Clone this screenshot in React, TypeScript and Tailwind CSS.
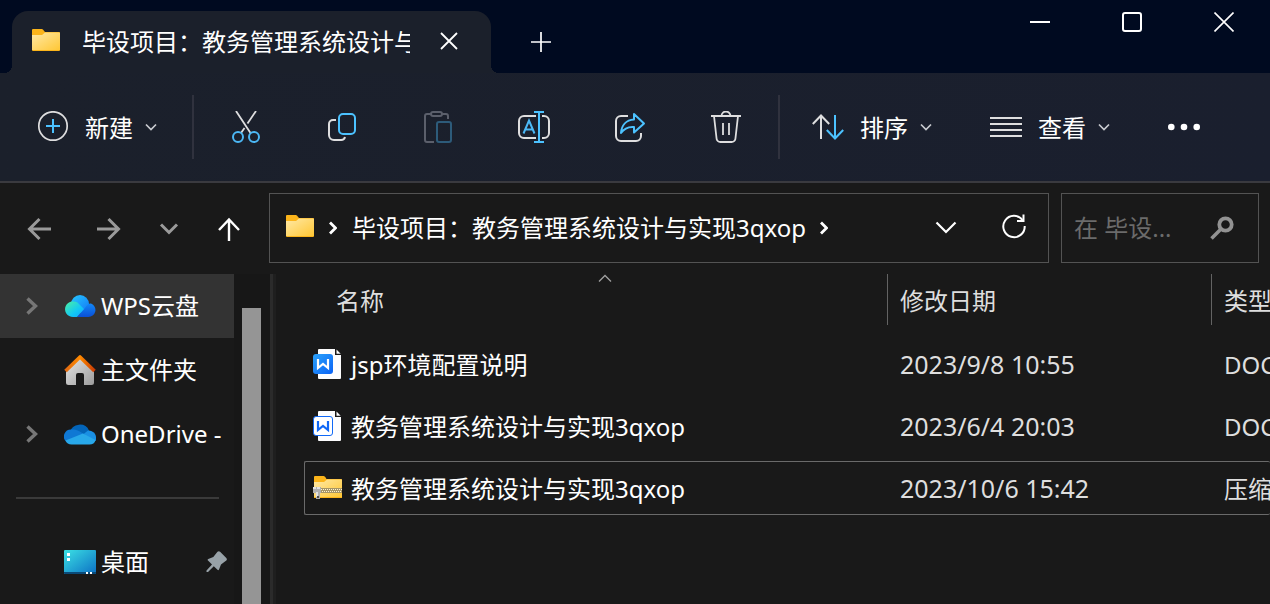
import type { ReactNode } from "react";

const TITLE = "毕设项目：教务管理系统设计与实现3qxop";

interface IconProps {
    readonly className?: string;
}

const FolderIcon = ({ className = "" }: IconProps) => (
    <svg width="28" height="22" viewBox="0 0 28 22" className={`shrink-0 ${className}`}>
        <defs>
            <linearGradient id="folder" x1="0" y1="0" x2="1" y2="1">
                <stop offset="0" stopColor="#ffe9a6" />
                <stop offset="1" stopColor="#ffc735" />
            </linearGradient>
        </defs>
        <path d="M0 1a1 1 0 0 1 1-1h8.500c1 0 1.500.5 2.200 1.500L13 3h14a1 1 0 0 1 1 1v17a1 1 0 0 1-1 1H1a1 1 0 0 1-1-1z" fill="#fbb41a" />
        <path d="M0 6h10l3-2.500h14.500l.5.5v17H0z" fill="url(#folder)" />
    </svg>
);

const ZipIcon = () => (
    <svg width="30" height="24" viewBox="0 0 30 24" className="-mr-0.5 shrink-0">
        <path d="M1 1a1 1 0 0 1 1-1h8.500c1 0 2 1 3 3H28a1 1 0 0 1 1 1v18H1z" fill="#fbb41a" />
        <path d="M1 6h10l3-2.500h15V21H1z" fill="url(#folder)" />
        <path d="M7 12h22v5H7z" fill="#a89666" />
        <path d="M8 13.500h21" stroke="#fff3d0" strokeWidth="1" strokeDasharray="1 1" />
        <path d="M9 15.500h20" stroke="#fff3d0" strokeWidth="1" strokeDasharray="1 1" />
        <path d="M0 11h8v6H7v6H3v-6H0z" fill="#b0b0b0" />
        <path d="M0 11h3v2H0zM4 11h3v2H4zM3 16h2v5H3z" fill="#e2e2e2" />
        <path d="M4 20h2v2H4z" fill="#4d4d4d" />
    </svg>
);

const DocIcon = ({ solid }: { readonly solid: boolean }) => (
    <svg width="28" height="32" viewBox="0 0 28 32" className="shrink-0">
        <defs>
            <linearGradient id="doc" x1="0" y1="0" x2="1" y2="1">
                <stop offset="0" stopColor="#2ba3fb" />
                <stop offset="1" stopColor="#0a62f5" />
            </linearGradient>
        </defs>
        <path d="M6 1h16v6h6v23a1 1 0 0 1-1 1H6a1 1 0 0 1-1-1V2a1 1 0 0 1 1-1z" fill="#fdfdfe" />
        <path d="M23.500 1.500v4.200h4.200z" fill="#fdfdfe" />
        {solid ? (
            <rect x="0" y="6" width="20" height="20" rx="3" fill="url(#doc)" />
        ) : (
            <rect x="0.500" y="6.500" width="19" height="19" rx="2.500" fill="#fff" stroke="#1068f6" />
        )}
        <path d="M5 11v9l5-4 5 4v-9" fill="none" stroke={solid ? "#fff" : "#1068f6"} strokeWidth="2.200" />
    </svg>
);

const Chevron = ({ className = "" }: IconProps) => (
    <svg width="12" height="8" viewBox="0 0 12 8" fill="none" className={className}>
        <path d="M1 1.500l5 5 5-5" stroke="#c9cbd0" strokeWidth="1.700" />
    </svg>
);

const CrumbChevron = ({ className = "" }: IconProps) => (
    <svg width="8" height="14" viewBox="0 0 8 14" fill="none" className={`shrink-0 ${className}`}>
        <path d="M1 1.500L6.500 7 1 12.500" stroke="#fff" strokeWidth="2.800" />
    </svg>
);

const ToolButton = ({ label, children }: { readonly label: string; readonly children: ReactNode }) => (
    <button type="button" aria-label={label} className="flex h-16 w-24 shrink-0 items-center justify-center">
        <svg width="32" height="32" viewBox="0 0 32 32" fill="none" stroke="#dededf" strokeWidth="2">
            {children}
        </svg>
    </button>
);

const MenuButton = ({ label, children }: { readonly label: string; readonly children: ReactNode }) => (
    <button type="button" className="flex h-16 shrink-0 items-center">
        <svg width="32" height="32" viewBox="0 0 32 32" fill="none" stroke="#dededf" strokeWidth="2">
            {children}
        </svg>
        <span className="ml-4 pt-0.5 text-2xl">{label}</span>
        <Chevron className="ml-3" />
    </button>
);

const Separator = () => <div className="mx-1 h-16 w-0.5 shrink-0 bg-[#30323e]" />;

const TitleBar = () => (
    <header className="flex h-[73px] bg-[#000a20]">
        <div className="relative mt-[11px] ml-3 flex w-[479px] shrink-0 items-center rounded-t-2xl bg-[#1b202b] pl-5">
            <span className="absolute bottom-0 -left-2 size-2 bg-[radial-gradient(circle_at_0_0,transparent_8px,#1b202b_8px)]" />
            <span className="absolute -right-2 bottom-0 size-2 bg-[radial-gradient(circle_at_100%_0,transparent_8px,#1b202b_8px)]" />
            <FolderIcon className="-mt-1" />
            <span className="ml-[22px] w-[328px] overflow-hidden text-2xl whitespace-nowrap">{TITLE}</span>
            <button type="button" aria-label="关闭标签页" className="ml-[30px]">
                <svg width="18" height="18" viewBox="0 0 18 18" stroke="#fff" strokeWidth="1.800" className="-mt-0.5">
                    <path d="M1 1l16 16M17 1L1 17" />
                </svg>
            </button>
        </div>
        <button type="button" aria-label="新标签页" className="mt-[11px] ml-10">
            <svg width="20" height="20" viewBox="0 0 20 20" stroke="#fff" strokeWidth="1.700">
                <path d="M10 0v20M0 10h20" />
            </svg>
        </button>
        <div className="ml-auto flex h-11">
            <button type="button" aria-label="最小化" className="flex w-[92px] items-center justify-center">
                <svg width="20" height="20" viewBox="0 0 20 20">
                    <path d="M0 9h20v2H0z" fill="#fff" />
                </svg>
            </button>
            <button type="button" aria-label="最大化" className="flex w-[92px] items-center justify-center">
                <svg width="20" height="20" viewBox="0 0 20 20" fill="none">
                    <rect x="1" y="1" width="18" height="18" rx="2" stroke="#fff" strokeWidth="2" />
                </svg>
            </button>
            <button type="button" aria-label="关闭" className="flex w-[92px] items-center justify-center">
                <svg width="20" height="20" viewBox="0 0 20 20" stroke="#fff" strokeWidth="1.600">
                    <path d="M.5.5l19 19M19.500.5l-19 19" />
                </svg>
            </button>
        </div>
    </header>
);

const Toolbar = () => (
    <div className="flex h-[110px] items-center overflow-hidden border-b-2 border-[#3a3a3f] bg-linear-to-r from-[#1b202b] to-[#1a1f2e] pl-[37px]">
        <MenuButton label="新建">
            <circle cx="16" cy="15" r="14.200" strokeWidth="1.700" />
            <path d="M16 8v14M9 15h14" stroke="#4cc2ff" />
        </MenuButton>
        <div className="ml-[31px]">
            <Separator />
        </div>
        <ToolButton label="剪切">
            <path d="M6 0l14.500 22M26 0L17.500 12.500M14.500 17L11 22" strokeWidth="1.800" />
            <circle cx="8" cy="26" r="5" stroke="#4cb8f5" />
            <circle cx="24" cy="26" r="5" stroke="#4cb8f5" />
        </ToolButton>
        <ToolButton label="复制">
            <path d="M10 9H7a4 4 0 0 0-4 4v11a5 5 0 0 0 5 5h7a4 4 0 0 0 4-3" />
            <rect x="13" y="3" width="16" height="20" rx="4" stroke="#4cc2ff" />
        </ToolButton>
        <ToolButton label="粘贴">
            <path d="M9 3H5a2 2 0 0 0-2 2v24a2 2 0 0 0 2 2h7M20 3h4a2 2 0 0 1 2 2v3" stroke="#5b5f6b" />
            <rect x="9" y="1" width="11" height="4" rx="2" stroke="#5b5f6b" />
            <rect x="15" y="11" width="14" height="20" rx="2" stroke="#2d5b7a" />
        </ToolButton>
        <ToolButton label="重命名">
            <path d="M18 5H6a5 5 0 0 0-5 5v12a5 5 0 0 0 5 5h12M24 5h2a5 5 0 0 1 5 5v12a5 5 0 0 1-5 5h-2" />
            <path d="M21 1v30M16 1h10M16 31h10" stroke="#4cc2ff" />
            <path d="M5.500 22.500L11 9.500l5.500 13M7.500 18.500h7" stroke="#4cb8f5" />
        </ToolButton>
        <ToolButton label="共享">
            <path d="M14 5H7a5 5 0 0 0-5 5v15a5 5 0 0 0 5 5h15a5 5 0 0 0 5-5v-3" />
            <path d="M20 3l10 9.500-10 9v-5.500c-6-.5-10 1.500-13 6 .5-7.500 5-13 13-13.500z" stroke="#4cc2ff" strokeLinejoin="round" />
        </ToolButton>
        <ToolButton label="删除">
            <path d="M1 5h30M11.500 5a4.500 4.500 0 0 1 9 0M4 5l2.500 22a4 4 0 0 0 4 4h11a4 4 0 0 0 4-4L28 5M13 12v12M19 12v12" strokeWidth="1.800" />
        </ToolButton>
        <Separator />
        <div className="ml-7 flex gap-[58px]">
            <MenuButton label="排序">
                <path d="M9 28V4.500M.8 13L9 4.500l8.200 8.500" />
                <path d="M23 4v23.500M14.800 19l8.200 8.500 8.200-8.500" stroke="#4cc2ff" />
            </MenuButton>
            <MenuButton label="查看">
                <path d="M0 7h32M0 13h32M0 19h32M0 25h32" />
            </MenuButton>
            <button type="button" aria-label="更多">
                <svg width="32" height="8" viewBox="0 0 32 8" fill="#fff">
                    <circle cx="3.300" cy="4" r="3.300" />
                    <circle cx="16" cy="4" r="3.300" />
                    <circle cx="28.700" cy="4" r="3.300" />
                </svg>
            </button>
        </div>
    </div>
);

const NavButton = ({ label, className, children }: { readonly label: string; readonly className: string; readonly children: ReactNode }) => (
    <button type="button" aria-label={label} className={`flex h-full shrink-0 items-center justify-center ${className}`}>
        <svg width="26" height="26" viewBox="0 0 26 26" fill="none" stroke="currentColor">
            {children}
        </svg>
    </button>
);

const AddressBar = () => (
    <div className="flex h-[91px] items-start pt-2.5 pr-[11px] pl-1">
        <nav className="mr-[5px] flex h-[70px]">
            <NavButton label="后退" className="w-[70px] text-[#9a9a9a]">
                <path d="M25 14H4M13.500 4L3.500 14l10 10" strokeWidth="3" />
            </NavButton>
            <NavButton label="前进" className="w-[70px] text-[#9a9a9a]">
                <path d="M1 14h21M12.500 4l10 10-10 10" strokeWidth="3" />
            </NavButton>
            <NavButton label="最近浏览的位置" className="w-[50px] text-[#9a9a9a]">
                <path d="M5 9.500l8 8 8-8" strokeWidth="3" />
            </NavButton>
            <NavButton label="向上" className="w-[70px] text-white">
                <path d="M13 26V5M3 15L13 4.500 23 15" strokeWidth="2.400" />
            </NavButton>
        </nav>
        <div className="mr-3 flex h-[70px] min-w-0 flex-1 items-center border border-[#535353] pr-[21px] pl-4">
            <FolderIcon className="-mt-1" />
            <CrumbChevron className="mx-[15px]" />
            <span className="min-w-0 overflow-hidden text-2xl whitespace-nowrap">{TITLE}</span>
            <CrumbChevron className="ml-3.5" />
            <button type="button" aria-label="以前的位置" className="mr-11 ml-auto">
                <svg width="22" height="14" viewBox="0 0 22 14" fill="none">
                    <path d="M1.500 1.500l9.500 9.500 9.500-9.500" stroke="#fff" strokeWidth="2.200" />
                </svg>
            </button>
            <button type="button" aria-label="刷新">
                <svg width="26" height="26" viewBox="0 0 26 26" fill="none" className="-mt-1">
                    <path d="M21.500 7A10.700 10.700 0 1 0 23.700 13" stroke="#fff" strokeWidth="2" />
                    <path d="M22.500 1.500V8H16" stroke="#fff" strokeWidth="2" />
                </svg>
            </button>
        </div>
        <label className="flex h-[70px] w-[198px] shrink-0 items-center border border-[#535353] pr-6 pl-3">
            <input
                type="text"
                aria-label="搜索"
                placeholder="在 毕设..."
                className="w-[120px] min-w-0 bg-transparent text-2xl outline-none placeholder:text-[#6b6b6b]"
            />
            <svg width="24" height="24" viewBox="0 0 24 24" fill="none" className="ml-auto">
                <circle cx="15.500" cy="8.500" r="6.200" stroke="#929292" strokeWidth="3.800" />
                <path d="M11 13L1.500 22.500" stroke="#929292" strokeWidth="3.600" />
            </svg>
        </label>
    </div>
);

interface SideItemProps {
    readonly label: string;
    readonly icon: ReactNode;
    readonly expandable?: boolean;
    readonly active?: boolean;
    readonly pinned?: boolean;
}

const SideItem = ({ label, icon, expandable, active, pinned }: SideItemProps) => (
    <a href="#" className={`flex h-16 items-center overflow-hidden pl-[22px] ${active ? "bg-[#333333]" : ""}`}>
        <svg width="20" height="20" viewBox="0 0 20 20" fill="none" className="mr-5 shrink-0">
            {expandable && <path d="M5.500 2.500L13.500 10l-8 7.500" stroke="#777" strokeWidth="3.400" />}
        </svg>
        <svg width="32" height="32" viewBox="0 0 32 32" className="ml-0.5 shrink-0">
            {icon}
        </svg>
        <span className="ml-[5px] text-2xl whitespace-nowrap">{label}</span>
        {pinned && (
            <svg width="22" height="22" viewBox="0 0 22 22" fill="#98a2a8" className="mr-1.5 ml-auto shrink-0">
                <path d="M11.500.800c.8-.8 1.800-.8 2.600 0l6.200 6.200c.8.8.8 1.800 0 2.600L15 13.500l-2 5c-.3.8-1 .8-1.500.3L7.800 15.200 2 21H.5v-1.500L6 13.500 2 9.500c-.6-.6-.4-1.400.3-1.600l5-2z" />
            </svg>
        )}
    </a>
);

const WpsCloud = (
    <>
        <defs>
            <linearGradient id="wpsTop" x1="0" y1="0" x2="1" y2="1">
                <stop offset="0" stopColor="#26c8ff" />
                <stop offset="1" stopColor="#1276f5" />
            </linearGradient>
            <linearGradient id="wpsLeft" x1="0" y1="0" x2="1" y2="1">
                <stop offset="0" stopColor="#4df0a0" />
                <stop offset="0.600" stopColor="#12c8f5" />
                <stop offset="1" stopColor="#10a4ff" />
            </linearGradient>
            <linearGradient id="wpsRight" x1="0" y1="0" x2="0" y2="1">
                <stop offset="0" stopColor="#1288f8" />
                <stop offset="1" stopColor="#0a4fd6" />
            </linearGradient>
        </defs>
        <circle cx="16" cy="14" r="9" fill="url(#wpsTop)" />
        <path d="M13 27l8-9c2-3 4-5 6-4.500a7 7 0 0 1-3 13.500z" fill="url(#wpsRight)" />
        <path d="M9 27a8 7.800 0 1 1 6-13l5 5-7 8z" fill="url(#wpsLeft)" />
    </>
);

const Home = (
    <>
        <defs>
            <linearGradient id="wall" x1="0" y1="0" x2="1" y2="1">
                <stop offset="0" stopColor="#e6e6e6" />
                <stop offset="1" stopColor="#9c9c9c" />
            </linearGradient>
            <linearGradient id="roof" x1="0" y1="0" x2="1" y2="0">
                <stop offset="0" stopColor="#e06a12" />
                <stop offset="0.500" stopColor="#ff8a00" />
                <stop offset="1" stopColor="#c93c04" />
            </linearGradient>
        </defs>
        <path d="M16 4L2 17v11.500A2.500 2.500 0 0 0 4.500 31H12V21a2 2 0 0 1 2-2h4a2 2 0 0 1 2 2v10h7.500a2.500 2.500 0 0 0 2.500-2.500V17z" fill="url(#wall)" />
        <path d="M1.500 17L16 3l14.500 14" fill="none" stroke="url(#roof)" strokeWidth="3.600" strokeLinejoin="round" />
    </>
);

const OneDrive = (
    <>
        <path d="M6 14a10 9.500 0 0 1 19-1.500l-4 8.500-15-3z" fill="#0364b8" />
        <path d="M19 16.500l5-4a7.500 7.500 0 0 1 7.500 10.500l-10-2z" fill="#1a8fe3" />
        <path d="M2 23.500A7 7 0 0 1 7 11.500c5-.5 8 1.500 14 5L4 25z" fill="#0f78d4" />
        <path d="M1.500 22.500L19 15.500 31.500 22c-.5 3-3 4.500-6 4.500H7.500c-2.800 0-5-1.500-6-4z" fill="#28a8ea" />
    </>
);

const Desktop = (
    <>
        <defs>
            <linearGradient id="desk" x1="0" y1="0" x2="1" y2="1">
                <stop offset="0" stopColor="#3be0e4" />
                <stop offset="1" stopColor="#0c70c4" />
            </linearGradient>
        </defs>
        <rect x="0" y="4" width="32" height="24" rx="1" fill="url(#desk)" />
        <path d="M0 26h32v1a1 1 0 0 1-1 1H1a1 1 0 0 1-1-1z" fill="#0a4a78" />
        <path d="M3 7h3v3H3zM3 12h3v3H3zM22 26h2v2h-2zM26 26h2v2h-2z" fill="#fff" />
    </>
);

const Sidebar = () => (
    <aside className="flex w-[276px] shrink-0">
        <div className="w-[234px]">
            <SideItem label="WPS云盘" icon={WpsCloud} expandable active />
            <SideItem label="主文件夹" icon={Home} />
            <SideItem label="OneDrive -" icon={OneDrive} expandable />
            <div className="flex h-16 items-center pr-[15px] pl-4">
                <hr className="w-full border-t-2 border-[#3a3a3a]" />
            </div>
            <SideItem label="桌面" icon={Desktop} pinned />
        </div>
        <div className="flex w-9 bg-[#171717] pt-[34px] pl-2">
            <div className="w-[19px] bg-[#959595]" />
        </div>
        <div className="w-[3px] bg-[#2b2b2b]" />
        <div className="w-[3px] bg-[#1f1f1f]" />
    </aside>
);

interface FileRow {
    readonly name: string;
    readonly date: string;
    readonly type: string;
    readonly icon: ReactNode;
    readonly focused?: boolean;
}

const files: FileRow[] = [
    { name: "jsp环境配置说明", date: "2023/9/8 10:55", type: "DOC", icon: <DocIcon solid /> },
    { name: "教务管理系统设计与实现3qxop", date: "2023/6/4 20:03", type: "DOC", icon: <DocIcon solid={false} /> },
    { name: "教务管理系统设计与实现3qxop", date: "2023/10/6 15:42", type: "压缩", icon: <ZipIcon />, focused: true },
];

const FileList = () => (
    <main className="min-w-0 flex-1 overflow-hidden pl-7">
        <table className="block text-2xl whitespace-nowrap">
            <thead className="block text-[#dedede]">
                <tr className="grid h-[51px] grid-cols-[583px_324px_1fr] text-left">
                    <th className="relative flex items-center pt-0.5 pl-8 font-normal">
                        名称
                        <svg width="14" height="8" viewBox="0 0 14 8" fill="none" className="absolute top-0 left-[294px]">
                            <path d="M1 7.500l6-6 6 6" stroke="#a0a0a0" strokeWidth="1.300" />
                        </svg>
                    </th>
                    <th className="flex items-center border-l border-[#636363] pt-0.5 pl-3 font-normal">修改日期</th>
                    <th className="flex items-center border-l border-[#636363] pt-0.5 pl-3 font-normal">类型</th>
                </tr>
            </thead>
            <tbody className="mt-3 flex flex-col gap-2">
                {files.map((file) => (
                    <tr
                        key={file.date}
                        className={`grid h-[54px] grid-cols-[582px_324px_1fr] items-center rounded-xs border border-r-0 ${file.focused ? "border-[#6a6a6a]" : "border-transparent"}`}
                    >
                        <td className="flex items-center gap-2.5 pl-2">
                            {file.icon}
                            <span className="pt-0.5">{file.name}</span>
                        </td>
                        <td className="pt-0.5 pl-[13px] text-[25px] text-[#dedede]">{file.date}</td>
                        <td className="pt-0.5 pl-[13px] text-[#dedede]">{file.type}</td>
                    </tr>
                ))}
            </tbody>
        </table>
    </main>
);

const App = () => (
    <div className="flex h-screen flex-col overflow-hidden bg-[#191919] font-['Noto_Sans','Noto_Sans_CJK_SC',sans-serif] text-white">
        <TitleBar />
        <Toolbar />
        <AddressBar />
        <div className="flex min-h-0 flex-1 overflow-hidden">
            <Sidebar />
            <FileList />
        </div>
    </div>
);

export default App;
